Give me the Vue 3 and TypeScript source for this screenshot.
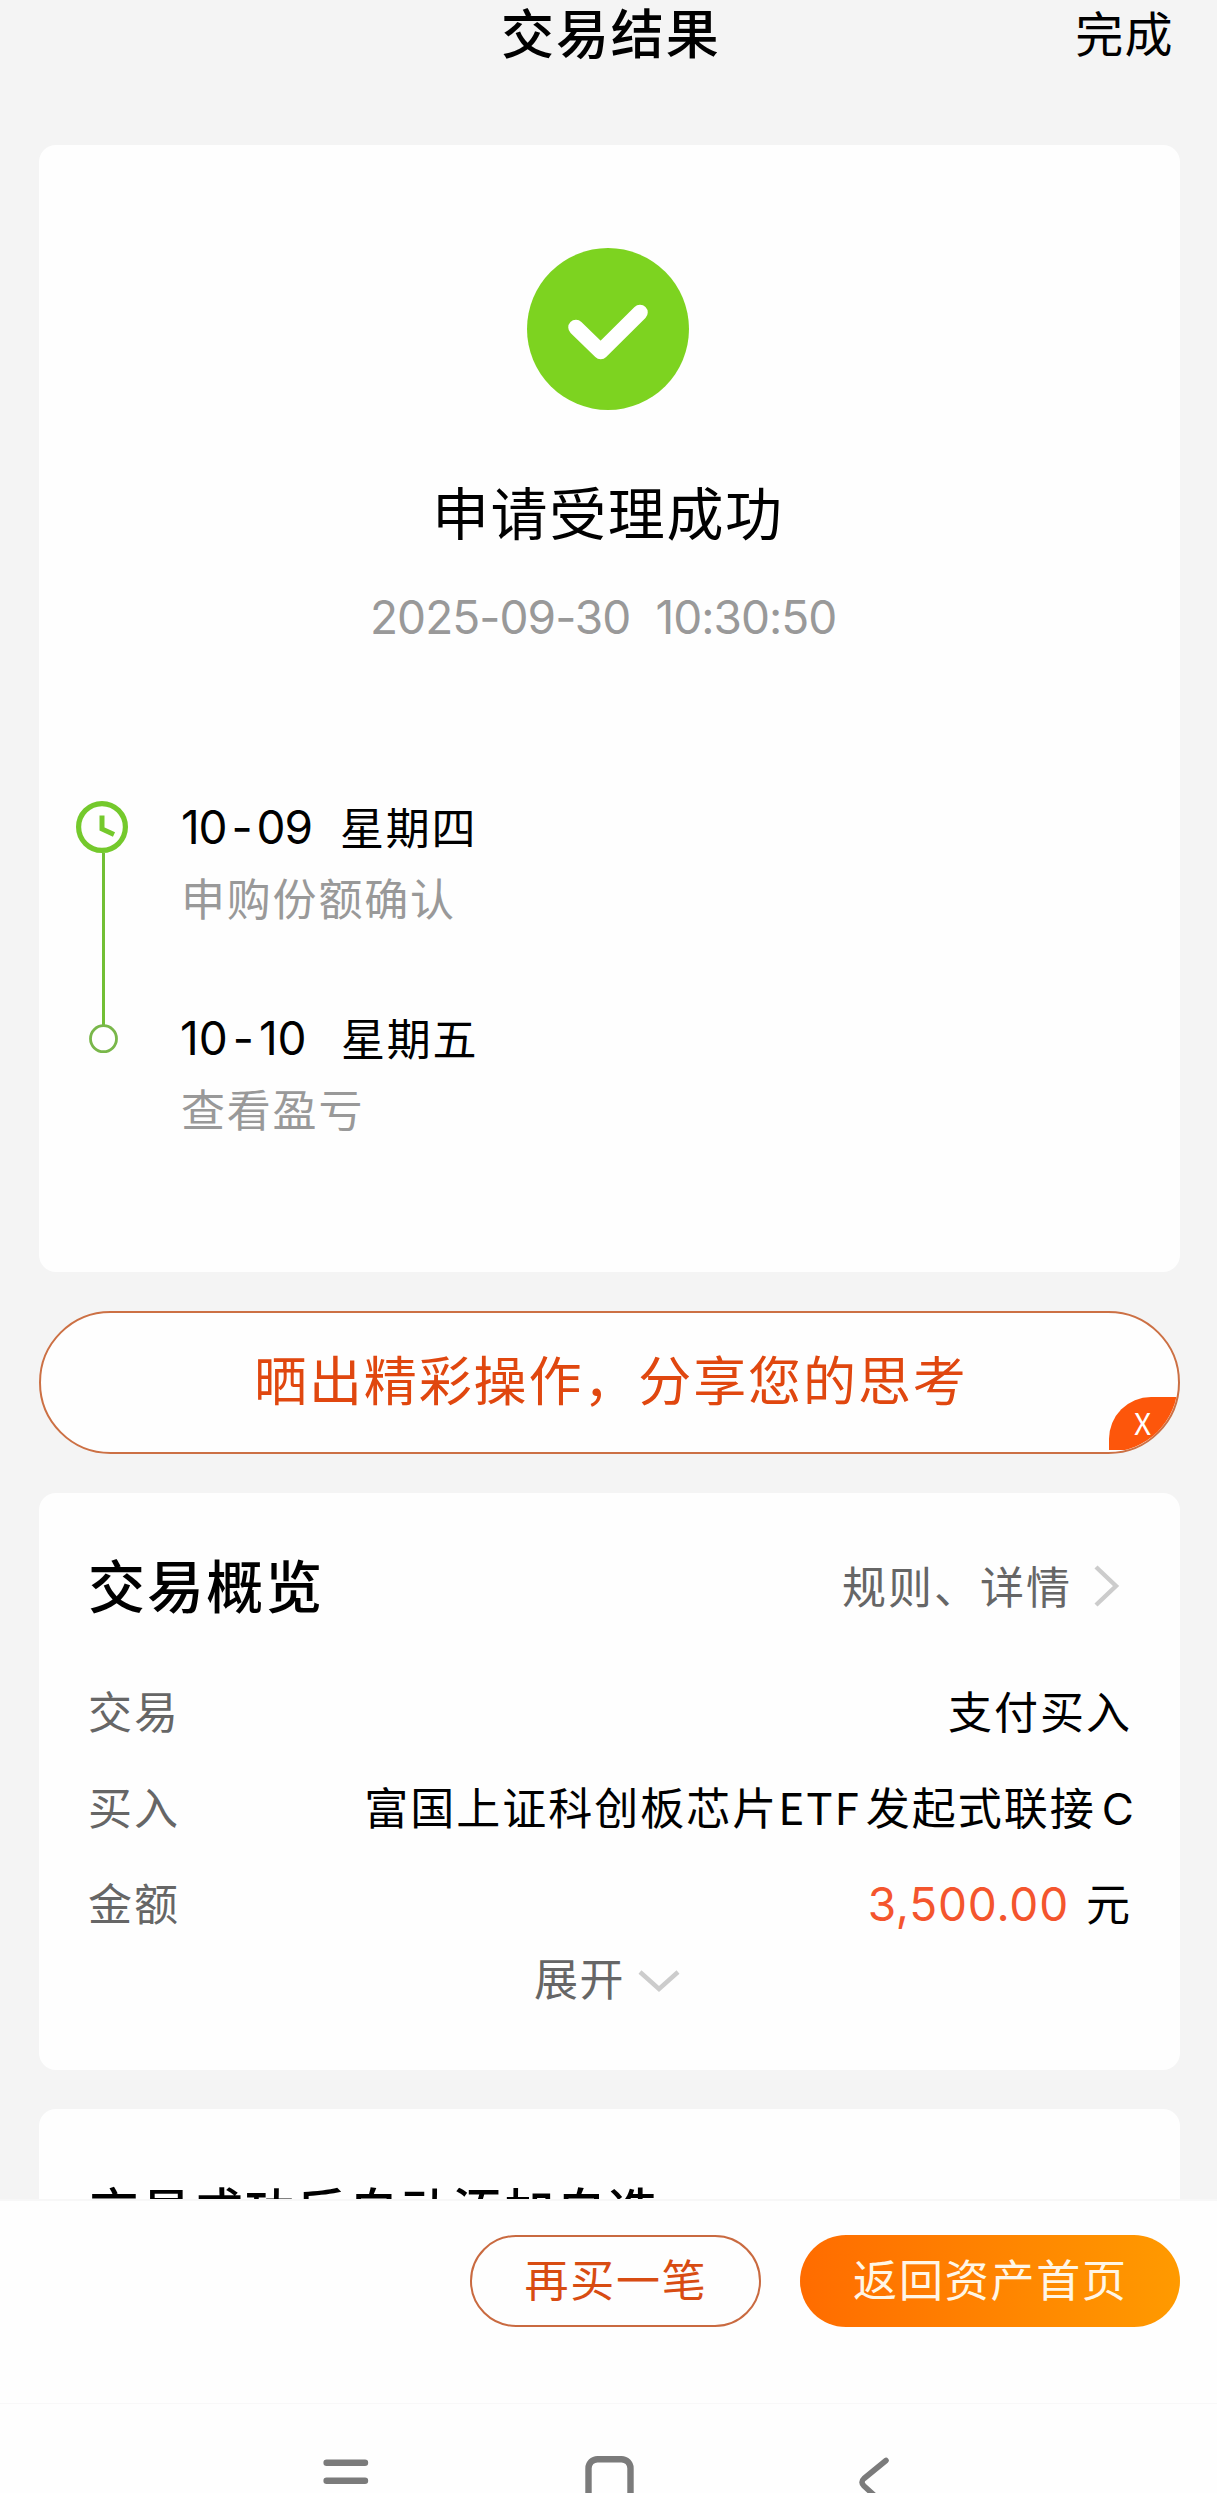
<script setup lang="ts">
interface Step {
  month: string
  day: string
  weekday: string
  note: string
}

const steps: Step[] = [
  { month: '10', day: '09', weekday: '星期四', note: '申购份额确认' },
  { month: '10', day: '10', weekday: '星期五', note: '查看盈亏' },
]
</script>

<template>
  <div class="screen">
    <header class="header">
      <h1 class="header-title">交易结果</h1>
      <span class="header-done">完成</span>
    </header>

    <main class="content">
      <section class="card result">
        <svg class="result-icon" viewBox="0 0 162 162">
          <circle cx="81" cy="81" r="81" fill="#7dd320" />
          <path d="M49 79.500 L73.700 103.500 L113 64.500" fill="none" stroke="#fff" stroke-width="15.5" stroke-linecap="round" stroke-linejoin="round" />
        </svg>
        <h2 class="result-title">申请受理成功</h2>
        <p class="result-time"><span>2025-09-30</span><span>10:30:50</span></p>

        <div class="timeline">
          <svg class="rail" viewBox="0 0 60 264">
            <path d="M31.5 56 V228" stroke="#72bf35" stroke-width="3" />
            <circle cx="30" cy="30" r="23.4" fill="none" stroke="#74c92c" stroke-width="5.2" />
            <path d="M30 18.500 V32 L42 37.500" fill="none" stroke="#74c92c" stroke-width="5" />
            <circle cx="31.5" cy="241.7" r="13" fill="#fff" stroke="#79b74a" stroke-width="2.8" />
          </svg>
          <ol class="steps">
            <li v-for="s in steps" :key="s.note" class="step">
              <div class="step-date">
                <span class="num"><b>{{ s.month }}</b><i>-</i><b>{{ s.day }}</b></span><span class="weekday">{{ s.weekday }}</span>
              </div>
              <div class="step-note">{{ s.note }}</div>
            </li>
          </ol>
        </div>
      </section>

      <section class="share">
        <span class="share-text">晒出精彩操作，分享您的思考</span>
        <span class="share-close">X</span>
      </section>

      <section class="card overview">
        <div class="overview-head">
          <h3>交易概览</h3>
          <span class="rules">规则、详情</span>
          <svg class="chev-right" viewBox="0 0 28 44">
            <path d="M3 3 L23 22 L3 41" fill="none" stroke="#ccc" stroke-width="4.4" />
          </svg>
        </div>
        <div class="row"><span class="label">交易</span><span class="value">支付买入</span></div>
        <div class="row"><span class="label">买入</span><span class="value">富国上证科创板芯片<span class="etf">ETF</span>发起式联接<span class="share-class">C</span></span></div>
        <div class="row"><span class="label">金额</span><span class="value"><em class="amount">3,500.00</em>元</span></div>
        <div class="expand">
          <span>展开</span>
          <svg class="chev-down" viewBox="0 0 42 26">
            <path d="M2 3 L21 20 L40 3" fill="none" stroke="#ccc" stroke-width="4.4" />
          </svg>
        </div>
      </section>

      <section class="card auto">
        <h3>交易成功后自动添加自选</h3>
      </section>
    </main>

    <footer class="actions">
      <button class="btn again">再买一笔</button>
      <button class="btn home">返回资产首页</button>
    </footer>

    <nav class="sysnav">
      <svg viewBox="0 0 1217 89" fill="none" stroke="#7b7b7b" stroke-width="6.4" stroke-linecap="round" stroke-linejoin="round">
        <path d="M326.6 58.7 H365 M326.6 76.7 H365" />
        <rect x="588.5" y="55.2" width="42" height="44" rx="9" />
        <path d="M886 56.5 L864 74.500 Q860 78 864 82 L886 102" stroke-width="5.6" />
      </svg>
    </nav>
  </div>
</template>

<style>
body {
  margin: 0;
  background: #f4f4f4;
}
</style>

<style scoped>
.screen {
  width: 1217px;
  height: 2493px;
  display: flex;
  flex-direction: column;
  overflow: hidden;
  background: #f4f4f4;
  color: #000;
  font-family: "Noto Sans CJK SC", sans-serif;
  font-weight: 400;
}
h1, h2, h3, p, ol {
  margin: 0;
  padding: 0;
  list-style: none;
  font-weight: 400;
}
.header {
  flex: none;
  height: 145px;
  box-sizing: border-box;
  padding: 0 43px 0 501px;
  display: flex;
  justify-content: space-between;
  align-items: flex-start;
  line-height: 62px;
}
.header-title {
  font-size: 53px;
  letter-spacing: 1.9px;
  font-weight: 500;
}
.header-done {
  font-size: 48px;
  letter-spacing: 1.4px;
}
.content {
  flex: none;
  height: 2054px;
  padding: 0 37px 0 39px;
  overflow: hidden;
}
.card {
  background: #fefefe;
  border-radius: 17px;
}
.result {
  height: 1127px;
  box-sizing: border-box;
  padding-top: 103px;
}
.result-icon {
  display: block;
  width: 162px;
  height: 162px;
  margin-left: 488px;
}
.result-title {
  margin-top: 60px;
  padding-left: 393px;
  line-height: 80px;
  font-size: 57px;
  letter-spacing: 1.6px;
}
.result-time {
  display: flex;
  gap: 25px;
  margin-top: 37px;
  padding-left: 331px;
  line-height: 60px;
  font-family: Inter, sans-serif;
  font-size: 46px;
  letter-spacing: -0.95px;
  color: #999;
}
.timeline {
  display: flex;
  margin-top: 150px;
  padding-left: 33px;
}
.rail {
  flex: none;
  width: 60px;
  height: 264px;
}
.steps {
  padding: 2px 0 0 49px;
}
.step {
  height: 211px;
}
.step-date {
  display: flex;
  line-height: 56px;
  font-size: 44px;
  letter-spacing: 1.7px;
}
.weekday {
  line-height: 54px;
}
.num {
  display: flex;
  width: 159px;
  font-family: Inter, sans-serif;
  font-size: 46px;
  letter-spacing: -1.1px;
}
.num b, .num i {
  font-weight: 400;
  font-style: normal;
}
.num i {
  padding: 0 5px;
}
.step:last-child .num {
  letter-spacing: 0;
  margin-left: -1px;
  width: 161px;
}
.step-note {
  margin-top: 17px;
  line-height: 50px;
  font-size: 44px;
  letter-spacing: 1.8px;
  color: #999;
}
.share {
  position: relative;
  height: 143px;
  margin-top: 39px;
  box-sizing: border-box;
  border: 2px solid #cc7044;
  border-radius: 72px;
  overflow: hidden;
  background: #fefefe;
  color: #e0470f;
  display: flex;
}
.share-text {
  padding-left: 213px;
  line-height: 131px;
  font-size: 53px;
  letter-spacing: 1.9px;
}
.share-close {
  position: absolute;
  right: 0;
  bottom: 2px;
  width: 69px;
  height: 53px;
  box-sizing: border-box;
  padding-left: 25px;
  border-radius: 42px 0 0 0;
  background: #fd560b;
  color: #fff;
  font-size: 30px;
  line-height: 50px;
}
.overview {
  height: 577px;
  margin-top: 39px;
  box-sizing: border-box;
  padding: 53px 48px 0 49px;
}
.overview-head {
  display: flex;
  align-items: center;
  height: 80px;
  margin-bottom: 46px;
}
.overview-head h3 {
  font-size: 57px;
  font-weight: 500;
  letter-spacing: 2.1px;
  line-height: 74px;
  margin-top: -6px;
}
.rules {
  margin: -3px 0 0 auto;
  font-size: 44px;
  letter-spacing: 2px;
  color: #666;
  line-height: 74px;
}
.chev-right {
  width: 28px;
  height: 44px;
  margin: 0 11px 0 21px;
}
.row {
  display: flex;
  justify-content: space-between;
  height: 96px;
  line-height: 76px;
  font-size: 44px;
  letter-spacing: 2px;
  white-space: nowrap;
}
.label {
  color: #666;
}
.etf {
  margin-right: 5px;
  letter-spacing: 2px;
}
.share-class {
  margin: 0 -4px 0 6px;
  font-family: Inter, sans-serif;
  font-size: 44px;
  line-height: 1;
}
.amount {
  margin-right: 17px;
  font-family: Inter, sans-serif;
  font-size: 46px;
  font-style: normal;
  line-height: 1;
  letter-spacing: 0.8px;
  color: #f4552d;
}
.expand {
  display: flex;
  justify-content: center;
  align-items: center;
  gap: 13px;
  margin-top: -13px;
  padding-right: 6px;
  line-height: 60px;
  font-size: 44px;
  letter-spacing: 1.6px;
  color: #666;
}
.chev-down {
  width: 42px;
  height: 26px;
  margin-top: 9px;
}
.auto {
  height: 200px;
  margin-top: 39px;
  box-sizing: border-box;
  padding: 66px 0 0 50px;
}
.auto h3 {
  font-size: 50px;
  font-weight: 500;
  letter-spacing: 1.9px;
  line-height: 66px;
}
.actions {
  flex: none;
  height: 205px;
  box-sizing: border-box;
  padding: 34px 37px 0;
  border-top: 2px solid #f7f7f7;
  display: flex;
  justify-content: flex-end;
  align-items: flex-start;
  gap: 39px;
  background: #fefefe;
}
.btn {
  display: flex;
  justify-content: center;
  align-items: flex-start;
  height: 92px;
  margin: 0;
  padding: 0 0 0 1px;
  box-sizing: border-box;
  border-radius: 46px;
  font: 400 44px/82px "Noto Sans CJK SC", sans-serif;
  letter-spacing: 1.8px;
}
.again {
  width: 291px;
  border: 2px solid #c96a40;
  background: #fefefe;
  color: #d84c12;
}
.home {
  width: 380px;
  border: 0;
  background: linear-gradient(90deg, #ff6c00, #ff9a00);
  color: #fff6e6;
  line-height: 86px;
}
.sysnav {
  flex: none;
  height: 89px;
  box-sizing: border-box;
  background: #fefefe;
  box-shadow: 0 -1px 0 #f8f8f8;
}
.sysnav svg {
  display: block;
  width: 1217px;
  height: 89px;
}
</style>
